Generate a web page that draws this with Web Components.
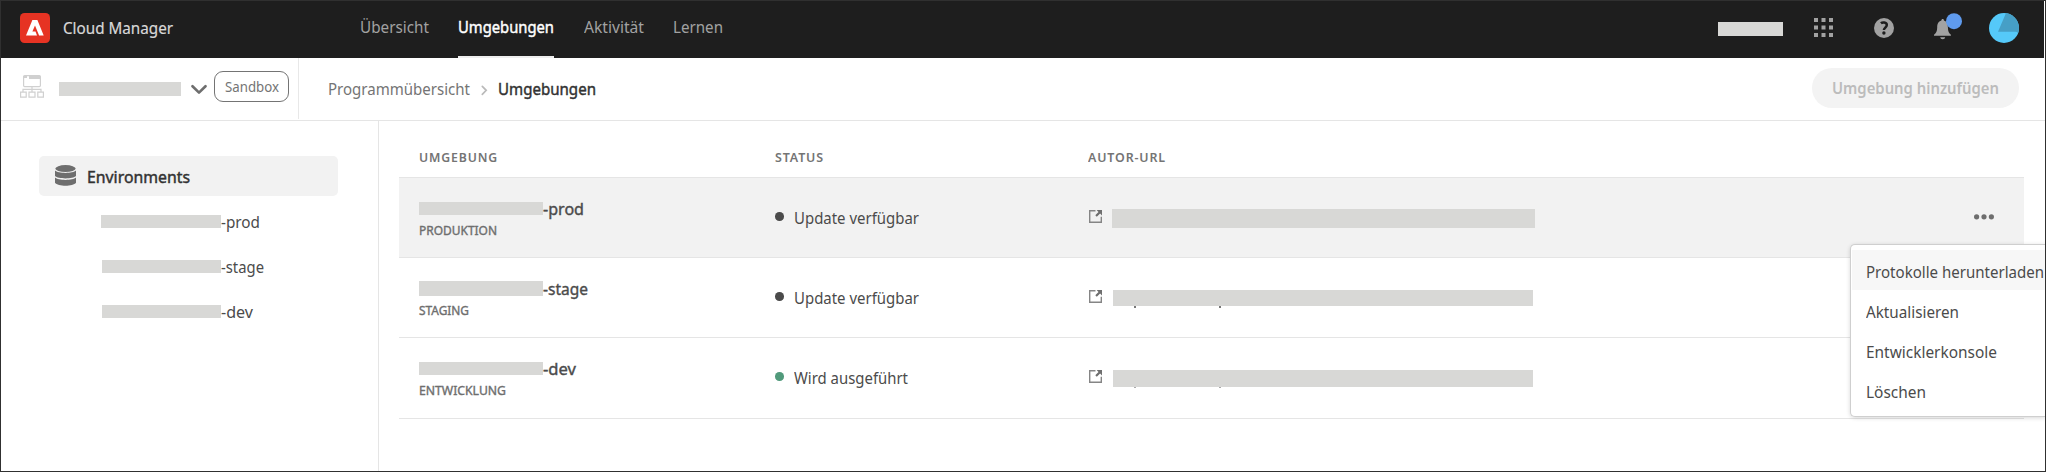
<!DOCTYPE html>
<html lang="de">
<head>
<meta charset="utf-8">
<title>Cloud Manager – Umgebungen</title>
<style>
html,body{margin:0;height:100%}
body{font-family:"Noto Sans","Open Sans",sans-serif;background:#fff;overflow:hidden}
</style>
</head>
<body>
<cm-app></cm-app>
<script>
const define = (name, html, init) => {
  const tpl = document.createElement('template');
  tpl.innerHTML = html;
  customElements.define(name, class extends HTMLElement {
    constructor() {
      super();
      this.attachShadow({mode: 'open'}).appendChild(tpl.content.cloneNode(true));
    }
    connectedCallback() { if (init) init(this, this.shadowRoot); }
  });
};

/* One line of text, condensed to the width given in "w". */
define('cm-text', `<style>
:host{display:block;flex:none;height:20px;line-height:20px;font-size:16.5px;white-space:nowrap}
span{display:inline-block;transform-origin:0 0}
</style><span><slot></slot></span>`, (el, root) => {
  const w = +el.getAttribute('w');
  el.style.width = w + 'px';
  const s = root.querySelector('span');
  const real = s.getBoundingClientRect().width;
  if (real) s.style.transform = 'scaleX(' + w / real + ')';
});

/* Masked value. */
define('cm-mask', `<style>:host{display:block;flex:none;background:#d8d8d6}</style>`, el => {
  el.style.width = el.getAttribute('w') + 'px';
  el.style.height = el.getAttribute('h') + 'px';
});

define('cm-header', `<style>
:host{display:flex;height:57px;width:2043px;background:#1e1e1e;color:#d8d8d8;box-sizing:border-box}
.logo{margin:12px 0 0 19px;width:30px;height:30px}
.brand{margin:17px 0 0 13px;-webkit-text-stroke:.2px}
nav{display:flex;margin-left:187px;color:#a2a2a2}
nav cm-text{margin-top:16px}
.tab{height:57px;margin:0 30px 0 29px;color:#fff;-webkit-text-stroke:.45px;border-bottom:2px solid #eee;box-sizing:border-box}
.tools{display:flex;margin-left:auto}
svg{display:block;flex:none}
</style>
<svg class="logo" viewBox="0 0 30 30"><rect width="30" height="30" rx="4.5" fill="#e63323"/><path fill="#fff" d="M12.4 7h5l6.300 15.400h-4.600L15 12.400l-2.600 6.100h3.100l1.500 3.900H6z"/></svg>
<cm-text class="brand" w="110">Cloud Manager</cm-text>
<nav><cm-text w="69">Übersicht</cm-text>
<div class="tab"><cm-text w="96">Umgebungen</cm-text></div>
<cm-text w="60">Aktivität</cm-text><cm-text w="50" style="margin-left:29px">Lernen</cm-text></nav>
<div class="tools">
<cm-mask w="65" h="14" style="margin-top:21px"></cm-mask>
<svg style="margin:17px 0 0 31px" width="19" height="19" fill="#a2a2a2"><path d="M0 0h4v4H0zM7.5 0h4v4h-4zM15 0h4v4h-4zM0 7.500h4v4H0zM7.500 7.500h4v4h-4zM15 7.500h4v4h-4zM0 15h4v4H0zM7.500 15h4v4h-4zM15 15h4v4h-4z"/></svg>
<svg style="margin:17px 0 0 41px" width="20" height="20"><circle cx="10" cy="10" r="10" fill="#a2a2a2"/><path d="M6.900 5.200C8.200 4.100 12.800 3.700 12.800 7c0 2.400-2.900 2.700-2.900 5" fill="none" stroke="#1e1e1e" stroke-width="2.500"/><circle cx="9.900" cy="15" r="1.700" fill="#1e1e1e"/></svg>
<svg style="margin:12px 0 0 40px" width="28" height="27"><path d="M8.700 6c.9 0 1.200.6 1.200 1.600 3.200.9 4 3.600 4 6.900 0 4 1 5.500 3 7.200v1.100H0v-1.100c2-1.700 3.200-3.200 3.200-7.200 0-3.300 1-6 4.200-6.900 0-1 .4-1.600 1.300-1.600zM6.200 24.200h5c-.2 1.300-1.100 2-2.500 2s-2.300-.7-2.500-2z" fill="#a2a2a2"/><circle cx="20" cy="8.200" r="8" fill="#5f9bee"/></svg>
<svg style="margin:12px 25px 0 27px" width="30" height="30"><clipPath id="a"><circle cx="15" cy="15" r="15"/></clipPath><g clip-path="url(#a)"><path fill="#55c9f9" d="M0 0h30v30H0z"/><path fill="#469fc6" d="M17 0h13v22c-1-2.500-1.500-3.300-3.500-3.300H9z"/></g></svg>
</div>`);

define('cm-subheader', `<style>
:host{display:flex;height:63px;border-bottom:1px solid #e5e5e5;box-sizing:border-box;color:#747474}
.program{display:flex;width:297px;height:61px;border-right:1px solid #e8e8e8;flex:none}
svg{display:block;flex:none}
.pill{box-sizing:border-box;width:75px;height:31px;border:1px solid #747474;border-radius:9px;margin:13px 0 0 7px;padding:5px 0 0 10px}
.pill cm-text{font-size:14px}
.here{color:#323232;-webkit-text-stroke:.45px}
.add{margin:10px 26px 0 auto;width:207px;height:40px;border-radius:20px;background:#f3f3f3;color:#bcbcbc;font-weight:600;padding:10px 0 0 20px;box-sizing:border-box}
</style>
<div class="program">
<svg style="margin:17px 0 0 19px" width="24" height="23" fill="none" stroke="#d0d0d0" stroke-width="1.200"><rect x="3.600" y=".6" width="16.800" height="11" rx="1"/><path d="M9 1h11v3H9zM4 1h3v2H4z" fill="#d0d0d0" stroke="none"/><path d="M12 12v5M3 17v-2.600h18V17"/><path d="M.6 17.200h5.600v4.900H.6zM9 17.200h6v4.900H9zM17.800 17.200h5.600v4.900h-5.600z"/></svg>
<cm-mask w="122" h="14" style="margin:24px 0 0 15px"></cm-mask>
<svg style="margin:26px 0 0 10px" width="16" height="12"><path d="M1.500 2.200 8 8.600l6.500-6.400" fill="none" stroke="#6e6e6e" stroke-width="2.600" stroke-linecap="round" stroke-linejoin="round"/></svg>
<div class="pill"><cm-text w="54">Sandbox</cm-text></div>
</div>
<cm-text w="142" style="margin:21px 0 0 29px">Programmübersicht</cm-text>
<svg style="margin:27px 0 0 11px" width="7" height="11"><path d="M1.300 1.300 5.200 5.300 1.300 9.300" fill="none" stroke="#bababa" stroke-width="1.700" stroke-linecap="round"/></svg>
<cm-text class="here" w="98" style="margin:21px 0 0 10px">Umgebungen</cm-text>
<div class="add"><cm-text w="167">Umgebung hinzufügen</cm-text></div>`);

define('cm-sidebar', `<style>
:host{display:block;width:377px;flex:none;border-right:1px solid #e5e5e5;color:#4b4b4b}
.head{display:flex;box-sizing:border-box;width:299px;height:40px;margin:35px 0 0 38px;border-radius:5px;background:#f2f2f2;color:#323232;-webkit-text-stroke:.45px;padding:9px 0 0 16px}
.head cm-text{margin:2px 0 0 11px}
.item{display:flex;width:238px;padding-left:101px;height:45px;margin-left:-1px}
.item cm-text{margin-top:-3px}
.items{padding-top:19px}
</style>
<div class="head"><svg width="21" height="21" viewBox="0 0 21 21" fill="#6e6e6e"><ellipse cx="10.500" cy="3.600" rx="10.200" ry="3.500"/><path d="M0 5.500c3 3.200 18 3.200 21 0V11c-3 3.200-18 3.200-21 0zM0 12.600c3 3.200 18 3.200 21 0v5.200c-3 3.900-18 3.900-21 0z"/></svg><cm-text w="103">Environments</cm-text></div>
<div class="items">
<div class="item"><cm-mask w="120" h="13"></cm-mask><cm-text w="39">-prod</cm-text></div>
<div class="item"><cm-mask w="119" h="13" style="margin-left:1px"></cm-mask><cm-text w="43">-stage</cm-text></div>
<div class="item"><cm-mask w="119" h="13" style="margin-left:1px"></cm-mask><cm-text w="32">-dev</cm-text></div>
</div>`);

define('cm-row', `<style>
:host{display:grid;grid-template-columns:356px 313px 1fr auto;height:80px;box-sizing:border-box;border-bottom:1px solid #e5e5e5;color:#4b4b4b;padding-left:20px}
:host([active]){background:#f2f2f2}
.name{display:flex;padding-top:24px;height:26px;-webkit-text-stroke:.4px}
::slotted([slot=name]){margin-top:-3px}
::slotted([slot=kind]){font-size:13px;color:#6e6e6e;-webkit-text-stroke:.4px;margin-top:-8px}
.status{display:flex}
.dot{width:8.600px;height:8.600px;border-radius:50%;background:#4b4b4b;margin:34px 10px 0 0}
:host([running]) .dot{background:#519a7b}
::slotted([slot=status]){margin-top:30px}
.url{display:flex}
.url svg{display:block;margin:32px 10px 0 1px;flex:none}
.more{display:none;margin:36px 30px 0 0}
:host([active]) .more{display:block}
</style>
<div><div class="name"><slot name="mask"></slot><slot name="name"></slot></div><slot name="kind"></slot></div>
<div class="status"><div class="dot"></div><slot name="status"></slot></div>
<div class="url"><svg width="13" height="13"><path d="M6.500.7H.7v11.600h11.600V6.800" fill="none" stroke="#858585" stroke-width="1.400"/><path d="M7.600 0H13v5.400l-1.900-1.900-3.300 3.200-1.500-1.500 3.200-3.300z" fill="#6e6e6e"/></svg><slot name="url"></slot></div>
<svg class="more" width="20" height="6" fill="#6e6e6e"><circle cx="2.600" cy="2.800" r="2.600"/><circle cx="10" cy="2.800" r="2.600"/><circle cx="17.400" cy="2.800" r="2.600"/></svg>`);

define('cm-table', `<style>
:host{display:block;width:1625px;margin-left:20px}
.head{display:grid;grid-template-columns:356px 313px 1fr;height:57px;box-sizing:border-box;border-bottom:1px solid #e5e5e5;padding:26px 0 0 20px;color:#747474}
.head cm-text{font-size:13px;letter-spacing:.9px;font-weight:600}
.mark{width:87px;height:1px;margin-left:21px;display:flex;justify-content:space-between}
.mark i{width:2px;height:2px;background:#777}
.mark.soft i{height:1px;background:#aaa}
</style>
<div class="head"><cm-text w="79">UMGEBUNG</cm-text><cm-text w="49">STATUS</cm-text><cm-text w="78">AUTOR-URL</cm-text></div>
<cm-row active><cm-mask slot="mask" w="124" h="13"></cm-mask><cm-text slot="name" w="41">-prod</cm-text><cm-text slot="kind" w="78">PRODUKTION</cm-text><cm-text slot="status" w="125">Update verfügbar</cm-text><cm-mask slot="url" w="423" h="19" style="margin-top:31px"></cm-mask></cm-row>
<cm-row><cm-mask slot="mask" w="124" h="15" style="margin-top:-1px"></cm-mask><cm-text slot="name" w="45">-stage</cm-text><cm-text slot="kind" w="50">STAGING</cm-text><cm-text slot="status" w="125">Update verfügbar</cm-text><div slot="url" style="margin:32px 0 0 1px"><cm-mask w="420" h="16"></cm-mask><div class="mark"><i></i><i></i></div></div></cm-row>
<cm-row running style="height:81px"><cm-mask slot="mask" w="124" h="13"></cm-mask><cm-text slot="name" w="33">-dev</cm-text><cm-text slot="kind" w="87">ENTWICKLUNG</cm-text><cm-text slot="status" w="114">Wird ausgeführt</cm-text><div slot="url" style="margin:32px 0 0 1px"><cm-mask w="420" h="17"></cm-mask><div class="mark soft"><i></i><i></i></div></div></cm-row>`);

define('cm-menu', `<style>
:host{display:block;position:absolute;left:1850px;top:244px;width:195px;height:173px;box-sizing:border-box;background:#fff;border:1px solid #cfcfcf;border-right:0;border-radius:5px 0 0 5px;box-shadow:0 1px 4px rgba(0,0,0,.16);color:#4b4b4b;padding-top:5px}
.i{height:40px;box-sizing:border-box;padding:12px 0 0 14px;margin-left:1px}
.sel{background:#f7f7f7}
</style>
<div class="i sel"><cm-text w="178">Protokolle herunterladen</cm-text></div>
<div class="i"><cm-text w="93">Aktualisieren</cm-text></div>
<div class="i"><cm-text w="131">Entwicklerkonsole</cm-text></div>
<div class="i"><cm-text w="60">Löschen</cm-text></div>`);

define('cm-app', `<style>
:host{display:block;position:relative;width:2046px;height:472px;box-sizing:border-box;border:1px solid #303030;overflow:hidden;background:#fff}
.body{display:flex;height:350px}
cm-menu{margin:-1px 0 0 -1px}
</style>
<cm-header></cm-header>
<cm-subheader></cm-subheader>
<div class="body"><cm-sidebar></cm-sidebar><cm-table></cm-table></div>
<cm-menu></cm-menu>`);
</script>
</body>
</html>
